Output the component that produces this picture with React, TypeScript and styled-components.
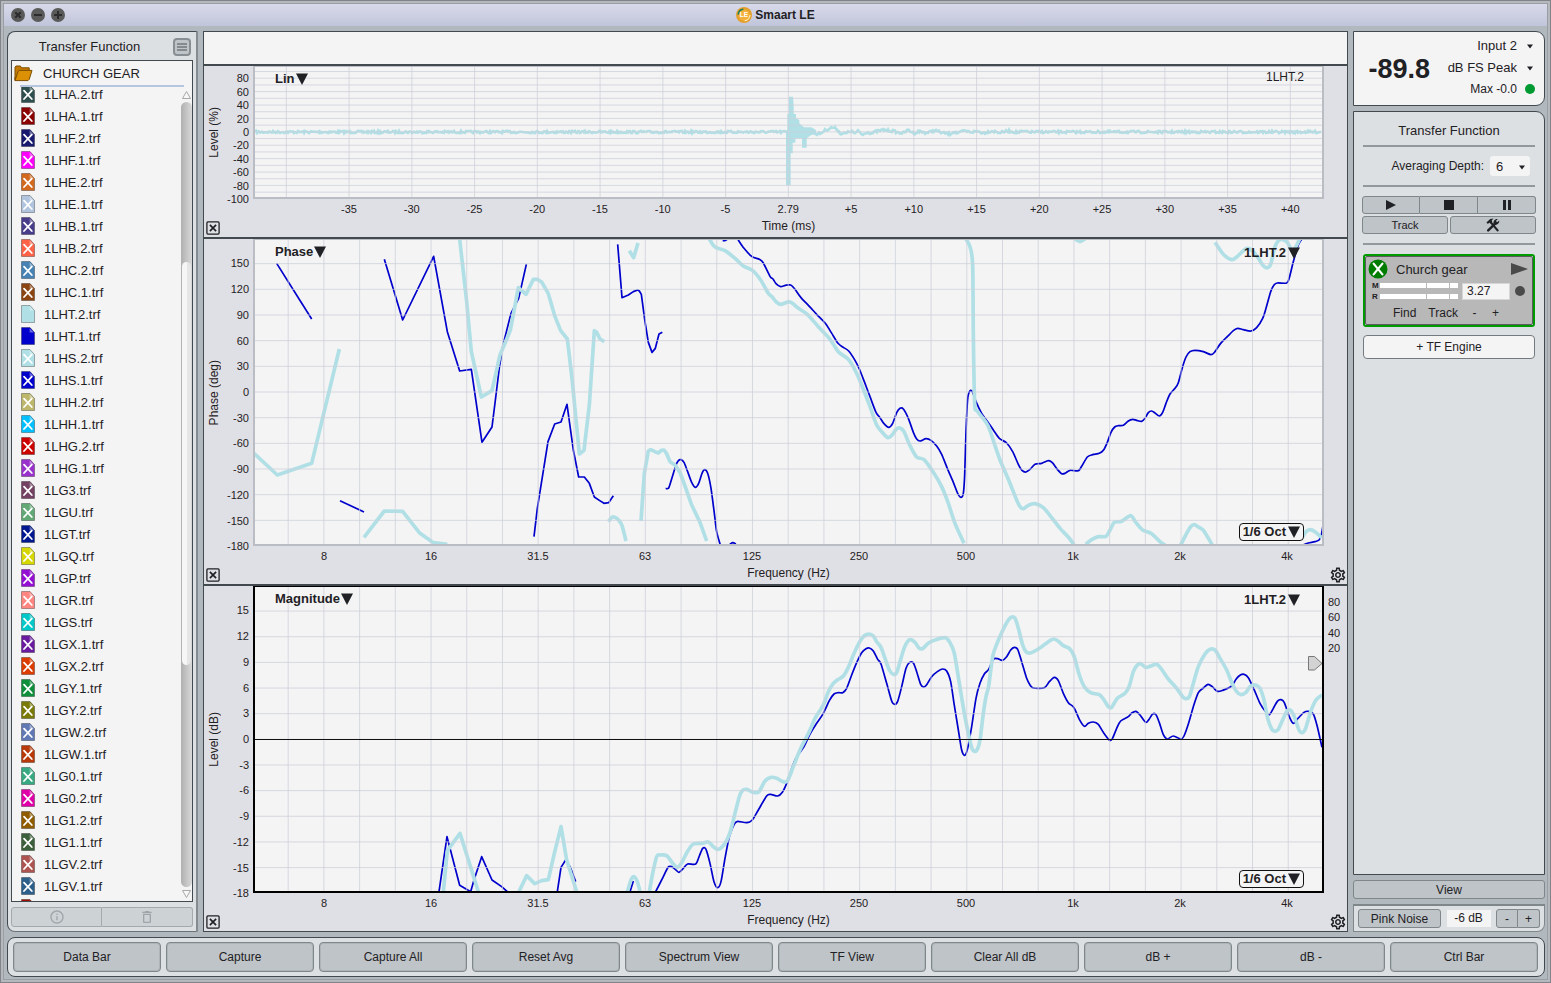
import React from "react";
import styled, { createGlobalStyle, css } from "styled-components";
import { MdDeleteOutline, MdInfoOutline, MdOutlineSettings } from "react-icons/md";

const ink = "#1f2124";
const edge = "#424a50";
const steel = "#bec4c8";
const steelEdge = "#7f878b";
const panelBg = "#dce0e3";
const paper = "#f4f4f4";
const light = "#b0e0e6";
const blue = "#0000cd";

const Global = createGlobalStyle`
  *, *::before, *::after { box-sizing: border-box; }
  body { margin: 0; font-family: "Liberation Sans", Arial, sans-serif; font-size: 12px; color: ${ink}; }
  button, input, select { font: inherit; color: inherit; margin: 0; }
`;

/* ---------- window frame ---------- */

const Window = styled.div`
  height: 100vh;
  min-height: 640px;
  padding: 2px;
  border: 1px solid #808488;
  background: #b5b9be;
  display: flex;
`;

const WindowInner = styled.div`
  flex: 1;
  min-width: 0;
  display: flex;
  flex-direction: column;
  border: 1px solid #9a9fa5;
  background: #b1b8be;
`;

const TitleBar = styled.header`
  height: 22px;
  padding: 0 7px;
  display: grid;
  grid-template-columns: 1fr auto 1fr;
  align-items: center;
  background: linear-gradient(#d8daea, #c1c5da);
`;

const WindowButtons = styled.div`
  display: flex;
  gap: 6px;
`;

const WindowButton = styled.button`
  width: 14px;
  height: 14px;
  padding: 0;
  border: 0;
  border-radius: 50%;
  background: #5a5a5a;
  svg { display: block; }
`;

const AppTitle = styled.h1`
  margin: 0;
  display: flex;
  align-items: center;
  gap: 3px;
  font-size: 12px;
  line-height: 16px;
`;

const Body = styled.div`
  flex: 1;
  min-height: 0;
  padding: 5px 2px 2px 3px;
  display: flex;
  flex-direction: column;
  gap: 5px;
`;

const Workspace = styled.div`
  flex: 1;
  min-height: 0;
  display: grid;
  grid-template-columns: 191px minmax(0, 1fr) 192px;
  gap: 5px;
`;

const steelButton = css`
  padding: 0;
  border: 1px solid ${steelEdge};
  background: ${steel};
  display: flex;
  align-items: center;
  justify-content: center;
`;

/* ---------- data bar ---------- */

const DataBar = styled.aside`
  min-height: 0;
  padding: 0 3px 4px 3px;
  display: flex;
  flex-direction: column;
  background: ${panelBg};
  border: 1px solid ${edge};
  border-right: 2px solid #848c92;
  border-bottom-color: #6a7278;
  border-radius: 8px 0 0 8px;
`;

const DataHead = styled.div`
  height: 28px;
  display: grid;
  grid-template-columns: 1fr 20px;
  align-items: center;
  padding-top: 1px;
`;

const DataTitle = styled.h2`
  margin: 0;
  padding-right: 5px;
  font-size: 13px;
  font-weight: 400;
  text-align: center;
`;

const MenuButton = styled.button`
  ${steelButton}
  width: 18px;
  height: 18px;
  border-radius: 4px;
  border-width: 2px;
  border-color: #878f94;
`;

const Library = styled.div`
  flex: 1;
  min-height: 0;
  display: flex;
  flex-direction: column;
  border: 1px solid ${edge};
  background: ${paper};
`;

const Folder = styled.button`
  height: 24px;
  padding: 0 0 0 2px;
  border: 0;
  background: none;
  display: flex;
  align-items: center;
  gap: 10px;
  font-size: 13px;
`;

const FolderRule = styled.div`
  height: 2px;
  margin: 0 8px;
  background: #b6c6df;
`;

const FileArea = styled.div`
  flex: 1;
  min-height: 0;
  display: grid;
  grid-template-columns: 1fr 11px;
`;

const FileList = styled.ul`
  margin: 0;
  padding: 0;
  list-style: none;
  overflow: hidden;
  & > li:first-child { margin-top: -4px; }
`;

const FileButton = styled.button`
  width: 100%;
  height: 22px;
  padding: 0 0 0 9px;
  border: 0;
  background: none;
  display: flex;
  align-items: center;
  gap: 9px;
  font-size: 13px;
  text-align: left;
  svg { display: block; }
`;

const ScrollBar = styled.div`
  display: flex;
  flex-direction: column;
  padding: 3px 0 2px;
  gap: 2px;
  svg { display: block; height: 10px; }
`;

const ScrollTrack = styled.div`
  flex: 1;
  display: grid;
  grid-template-rows: 160fr 404fr 222fr;
  border-radius: 6px;
  background: linear-gradient(90deg, #b0b0b0, #d9d9d9);
`;

const ScrollThumb = styled.div`
  grid-row: 2;
  margin: 0 1px;
  border-radius: 5px;
  background: linear-gradient(90deg, #f6f6f6 50%, #e6e6e6 50%);
`;

const DataActions = styled.div`
  margin-top: 5px;
  height: 20px;
  display: grid;
  grid-template-columns: 1fr 1fr;
`;

const DataAction = styled.button`
  ${steelButton}
  background: #cdd2d5;
  border-color: #a3a9ad;
  color: #a0a5a9;
  &:first-child { border-radius: 3px 0 0 3px; }
  &:last-child { border-radius: 0 3px 3px 0; border-left-width: 0; }
`;

/* ---------- plots ---------- */

const Center = styled.main`
  min-width: 0;
  min-height: 0;
  display: grid;
  grid-template-rows: 34px minmax(0, 173fr) minmax(0, 347fr) minmax(0, 345fr);
  border: 1px solid ${edge};
  background: #dfe0e5;
`;

const Banner = styled.div`
  background: ${paper};
  border-bottom: 2px solid ${edge};
`;

const PlotSection = styled.section`
  min-height: 0;
  display: grid;
  grid-template-columns: 49px minmax(0, 1fr) 23px;
  grid-template-rows: minmax(0, 1fr) 20px 18px;
  &:not(:last-child) { border-bottom: 2px solid ${edge}; }
`;

const YAxis = styled.div`
  display: grid;
  grid-template-columns: 20px 1fr;
  align-items: center;
  min-height: 0;
`;

const YTitle = styled.span`
  writing-mode: vertical-rl;
  transform: rotate(180deg);
  line-height: 20px;
  font-size: 12px;
  justify-self: start;
  white-space: nowrap;
`;

const AxisSvg = styled.svg`
  display: block;
  width: 100%;
  height: 100%;
  min-height: 0;
  overflow: visible;
  fill: ${ink};
  font-size: 11px;
`;

const Frame = styled.div<{ $active?: boolean }>`
  position: relative;
  min-height: 0;
  border: 2px solid ${(p) => (p.$active ? "#000" : "#babdc3")};
  border-top-width: 1px;
  background: ${paper};
`;

const Chart = styled.svg`
  display: block;
  width: 100%;
  height: 100%;
  path, line { vector-effect: non-scaling-stroke; fill: none; }
  .grid { stroke: rgba(204, 207, 217, 0.75); stroke-width: 1; }
`;

const PlotMenu = styled.button<{ $place: "left" | "right" | "foot" }>`
  position: absolute;
  padding: 0;
  border: 0;
  background: none;
  display: flex;
  align-items: center;
  font-size: 13px;
  font-weight: 700;
  line-height: 16px;
  white-space: nowrap;
  ${(p) => p.$place === "left" && css`top: 4px; left: 20px; gap: 1px;`}
  ${(p) => p.$place === "right" && css`top: 5px; right: 22px; gap: 2px;`}
  ${(p) =>
    p.$place === "foot" &&
    css`
      right: 18px;
      bottom: 3px;
      height: 18px;
      padding: 0 3px;
      gap: 2px;
      border: 1px solid #111;
      border-radius: 4px;
      background: ${paper};
    `}
`;

const PlotName = styled.span`
  position: absolute;
  top: 3px;
  right: 18px;
  font-size: 12px;
  line-height: 14px;
`;

const Marker = styled.svg`
  position: absolute;
  right: -1px;
  top: 22%;
  margin-top: 2px;
`;

const XTitle = styled.span`
  grid-column: 2;
  text-align: center;
  line-height: 14px;
`;

const CloseBox = styled.button`
  grid-column: 1;
  width: 14px;
  height: 14px;
  margin: 2px 0 0 2px;
  padding: 0;
  border: 0;
  background: none;
  svg { display: block; }
`;

const GearButton = styled.button`
  padding: 0;
  border: 0;
  background: none;
  display: flex;
  justify-content: flex-end;
  svg { display: block; }
`;

/* ---------- control bar ---------- */

const Controls = styled.aside`
  min-height: 0;
  display: flex;
  flex-direction: column;
  gap: 5px;
`;

const LevelMeter = styled.section`
  height: 75px;
  padding: 1px 9px 4px 0;
  display: grid;
  grid-template-columns: 1fr auto;
  align-items: center;
  border: 1px solid ${edge};
  border-radius: 0 9px 9px 0;
  background: ${paper};
`;

const LevelValue = styled.strong`
  font-size: 27px;
  line-height: 30px;
  text-align: right;
  padding-top: 4px;
  padding-right: 17px;
`;

const LevelSource = styled.div`
  display: flex;
  flex-direction: column;
`;

const SourceRow = styled.label`
  height: 22px;
  display: flex;
  align-items: center;
  justify-content: flex-end;
  gap: 8px;
  svg { flex: none; }
`;

const PlainSelect = styled.select`
  appearance: none;
  padding: 0;
  border: 0;
  background: none;
  font-size: 13px;
  text-align-last: right;
`;

const TfPanel = styled.section`
  flex: 1;
  min-height: 0;
  padding: 0 8px;
  display: flex;
  flex-direction: column;
  border: 1px solid ${edge};
  border-radius: 0 9px 0 0;
  background: ${panelBg};
`;

const TfTitle = styled.h2`
  margin: 0;
  padding-top: 2px;
  height: 33px;
  line-height: 33px;
  font-size: 13px;
  font-weight: 400;
  text-align: center;
`;

const Rule = styled.hr`
  width: 172px;
  margin: 0 auto;
  height: 2px;
  border: 0;
  background: #92999d;
  flex: none;
`;

const DepthRow = styled.label`
  height: 38px;
  padding-right: 6px;
  display: flex;
  align-items: center;
  justify-content: flex-end;
  gap: 6px;
`;

const DepthField = styled.span`
  width: 40px;
  height: 20px;
  padding: 0 3px 0 6px;
  display: flex;
  align-items: center;
  justify-content: space-between;
  border-radius: 3px;
  background: ${paper};
  select { text-align-last: left; }
`;

const Transport = styled.div`
  margin-top: 9px;
  height: 18px;
  display: grid;
  grid-template-columns: repeat(3, 1fr);
`;

const TransportButton = styled.button`
  ${steelButton}
  &:first-child { border-radius: 3px 0 0 3px; }
  &:last-child { border-radius: 0 3px 3px 0; }
  &:not(:first-child) { border-left-width: 0; }
`;

const ToolRow = styled.div`
  margin: 2px 0 9px;
  height: 18px;
  display: grid;
  grid-template-columns: 1fr 1fr;
  gap: 2px;
`;

const ToolButton = styled.button`
  ${steelButton}
  border-radius: 3px;
  font-size: 11px;
`;

const Engine = styled.article`
  width: 172px;
  margin: 9px auto 8px;
  border: 2px solid #009a00;
  border-radius: 3px;
`;

const EngineInner = styled.div`
  height: 69px;
  border: 1px solid #5c5c60;
  border-radius: 2px;
  background: #b8b8b8;
`;

const EngineHead = styled.div`
  height: 24px;
  padding: 0 4px 0 2px;
  display: grid;
  grid-template-columns: 20px 1fr 18px;
  column-gap: 8px;
  align-items: center;
  font-size: 13px;
  svg { display: block; }
`;

const EngineLevels = styled.div`
  height: 20px;
  padding: 0 5px 0 6px;
  display: grid;
  grid-template-columns: 85px 48px 10px;
  column-gap: 5px;
  align-items: center;
`;

const Meters = styled.div`
  display: grid;
  row-gap: 2px;
`;

const MeterRow = styled.div`
  display: grid;
  grid-template-columns: 8px 1fr;
  align-items: center;
  height: 9px;
  font-size: 8px;
  font-weight: 700;
  line-height: 9px;
`;

const MeterBar = styled.div`
  height: 5px;
  display: grid;
  grid-template-columns: 46px 22px 8px;
  gap: 1px;
  span { background: #fff; }
`;

const DelayInput = styled.input`
  width: 48px;
  height: 17px;
  padding: 0 4px;
  border: 1px solid #d6d6d6;
  background: ${paper};
  font-size: 12px;
`;

const StatusDot = styled.span<{ $color: string }>`
  width: 10px;
  height: 10px;
  border-radius: 50%;
  background: ${(p) => p.$color};
`;

const EngineActions = styled.div`
  height: 23px;
  padding-left: 27px;
  display: flex;
  align-items: center;
  gap: 12px;
`;

const TextButton = styled.button`
  padding: 0;
  border: 0;
  background: none;
  min-width: 9px;
`;

const AddEngine = styled.button`
  width: 172px;
  height: 24px;
  margin: 0 auto;
  padding: 0;
  border: 1px solid #747b80;
  border-radius: 4px;
  background: ${paper};
`;

const ViewButton = styled.button`
  ${steelButton}
  height: 19px;
  border-radius: 3px;
`;

const Generator = styled.section`
  height: 28px;
  padding: 0 4px;
  display: flex;
  align-items: center;
  justify-content: space-between;
  border: 1px solid ${steelEdge};
  border-top-width: 2px;
  border-radius: 0 0 8px 0;
  background: ${panelBg};
`;

const NoiseButton = styled.button`
  ${steelButton}
  width: 83px;
  height: 19px;
  border-radius: 3px;
`;

const NoiseLevel = styled.output`
  width: 44px;
  line-height: 17px;
  background: ${paper};
  text-align: center;
`;

const Stepper = styled.div`
  width: 44px;
  height: 19px;
  display: grid;
  grid-template-columns: 1fr 1fr;
`;

/* ---------- command bar ---------- */

const CommandBar = styled.nav`
  height: 40px;
  padding: 4px 6px 4px 5px;
  display: grid;
  grid-auto-flow: column;
  grid-auto-columns: minmax(0, 1fr);
  gap: 5px;
  border: 1px solid ${edge};
  border-radius: 8px;
  background: ${panelBg};
`;

const CommandButton = styled.button`
  ${steelButton}
  border-radius: 4px;
  box-shadow: inset 0 0 0 1px rgba(127, 135, 139, 0.25);
`;

/* ---------- drawings ---------- */

const Down = () => (
  <svg width="12" height="12" viewBox="0 0 12 12" aria-hidden="true">
    <path d="M0 0.5H12L6 12Z" fill={ink} />
  </svg>
);

const Caret = () => (
  <svg width="10" height="8" viewBox="0 0 10 8" aria-hidden="true">
    <path d="M2 3.5H8L5 7.5Z" fill={ink} />
  </svg>
);

const Logo = () => (
  <svg width="16" height="16" viewBox="0 0 16 16" aria-hidden="true">
    <circle cx="8" cy="8" r="8" fill="#e5a02c" />
    <circle cx="8" cy="8" r="5.6" fill="#f3b13c" />
    <path d="M2.2 7.6A5.9 5.9 0 0 1 7.4 2.2" fill="none" stroke="#1c8059" strokeWidth="1.6" />
    <path d="M14 8A6 6 0 0 1 8.6 13.8" fill="none" stroke="#fff0c8" strokeWidth="1.1" />
    <text x="8" y="10.4" textAnchor="middle" fontSize="6.5" fontWeight="700" fill="#fff">LE</text>
  </svg>
);

const FolderIcon = () => (
  <svg width="19" height="17" viewBox="0 0 19 17" aria-hidden="true">
    <path d="M1 15V2.2L2 1H6.4L7.6 2.8H15.2V6" fill="#c47a02" stroke="#7d4e00" strokeWidth="1" />
    <path d="M1 15.6L4.2 6.2L5.2 5.4H18L15.2 14.4L14 15.6Z" fill="#dc9006" stroke="#7d4e00" strokeWidth="1" />
    <path d="M1 15.6V12" stroke="#7d4e00" />
  </svg>
);

const FileIcon = ({ color, hidden }: { color: string; hidden: boolean }) => (
  <svg width="14" height="18" viewBox="0 0 14 18" aria-hidden="true">
    <path d="M0.5 0.5H9L13.5 5.5V17.5H0.5Z" fill={color} stroke="rgba(0,0,0,0.3)" />
    <path d="M8.6 1.2V5.4H12.8Z" fill="rgba(255,255,255,0.4)" />
    {hidden && (
      <path d="M3 5.6L10.8 14M10.8 5.6L3 14" stroke="#fff" strokeWidth="1.8" strokeLinecap="round" />
    )}
  </svg>
);

const ToolsIcon = () => (
  <svg width="14" height="14" viewBox="0 0 14 14" aria-hidden="true">
    <path d="M2.2 12.4L9.2 5.6" stroke={ink} strokeWidth="2.4" strokeLinecap="round" />
    <path d="M7.6 6C7 3.4 8.8 0.6 11.8 1.1L9.9 2.9L11.2 4.2L13.2 2.4C13.6 5.2 11 7.4 8.4 6.6Z" fill={ink} />
    <path d="M4.8 4.4L11.6 12.4" stroke={ink} strokeWidth="2.2" strokeLinecap="round" />
    <path d="M0.4 4.4L4.2 1L7.4 0.6L5.8 2.4L6.2 4L4.4 5.6L3.2 4.6L2 5.9Z" fill={ink} />
  </svg>
);

/* ---------- trace data ---------- */

type Block = [number, string];
interface Trace {
  blocks: Block[];
  straight?: boolean;
}

const phaseBlue: Trace[] = [
  { straight: true, blocks: [[0, "80,85 185,252"]] },
  { straight: true, blocks: [[0, "270,797 342,831"]] },
  { straight: true, blocks: [[0, "403,73 458,255 551,64 592,290 629,408 664,403 696,622 726,576 738,480 748,398 758,335 783,235 806,190 829,88"]] },
  { straight: true, blocks: [[0, "852,905 862,820 894,620 914,567 933,561 951,508 970,645 986,726 1003,726 1018,745 1033,786 1048,796 1062,805 1076,803 1090,782"]] },
  { straight: true, blocks: [[1050, "53,28 66,188 85,180 100,170 113,165 118,168 124,178 135,260 145,322 156,352 166,340 177,297 187,292"]] },
  { blocks: [[1050, "197,761 206,759 214,735 228,690 236,676 243,674 252,682 263,710 275,742 286,757 296,745 306,715 314,704 323,715 333,760 343,835 350,890 361,930"]] },
  { blocks: [[1050, "368,17 375,17 381,14"]] },
  { blocks: [[1050, "388,930 398,923 408,927"]] },
  {
    blocks: [
      [1050, "413,12 432,40 456,65 478,73 490,84 510,124 519,132 528,146 542,155 556,151 572,150 585,163 603,188 628,214 650,238 676,265 694,293 714,325 730,337 746,348 765,376 778,402 793,440 810,485 828,532 840,548 852,566 866,577 878,565 890,533 900,520 910,522 925,550 940,592 950,612 960,618 978,611 993,616 1010,633 1025,658 1042,700 1060,742 1073,775 1083,787 1090,775 1094,720 1098,590 1103,492 1110,467 1118,472 1128,500 1145,535 1163,560 1180,585"],
      [2100, "148,610 170,624 188,650 205,688 216,706 228,711 240,703 255,688 275,685 295,677 307,683 322,703 335,716 345,715 360,706 385,707 395,694 412,666 428,659 448,655 460,646 472,622 483,592 494,576 505,572 520,571 535,558 548,553 560,556 575,559 585,550 595,533 605,528 615,534 628,543 638,532 648,505 660,477 675,460 685,443 697,398 708,366 720,350 735,346 760,350 783,359 795,350 812,325 835,302 850,287 863,280 880,284 903,288 920,278 938,250 948,220 962,170 972,150 982,144 1010,144 1018,128 1030,80 1045,30 1057,10"],
    ],
  },
  { blocks: [[2100, "1060,930 1075,924 1095,920 1108,914 1115,895 1121,858"]] },
];

const phaseLight: Trace[] = [
  { straight: true, blocks: [[0, "12,655 82,720 185,685 268,342"]] },
  { straight: true, blocks: [[0, "342,907 403,828 458,829 508,893 550,923 592,928"]] },
  { straight: true, blocks: [[0, "629,12 650,200 664,350 694,486 726,467 750,360 781,286 805,158 828,178 850,133 862,133 875,141 895,176 915,245 932,287 952,312 966,430 988,657 1002,646 1018,510 1033,287 1040,292 1050,312 1063,320"]] },
  { blocks: [[1050, "25,860 35,848 42,846 55,854 66,872 78,918"]] },
  { straight: true, blocks: [[1050, "123,858 133,715 145,648 152,644 165,650 175,654 184,646 192,645 200,656 210,680 225,690 240,712 256,756 275,810 300,862 320,918"]] },
  { straight: true, blocks: [[1050, "88,47 101,68 114,24"]] },
  { blocks: [[1050, "328,12 345,36 375,47 405,70 430,93 458,107 482,135 505,175 516,185 528,200 542,208 570,201 595,220 622,238 655,275 690,313 715,350 745,373 765,405 785,450 810,515 830,570 848,593 864,608 878,598 888,583 900,579 912,590 930,632 950,666 972,674 1000,712 1025,755 1045,805 1065,865 1092,925"]] },
  {
    blocks: [
      [1050, "1098,12 1110,35 1118,90 1120,300 1124,505 1132,528 1163,570 1185,632"],
      [2100, "150,675 175,733 200,795 210,815 220,821 235,811 255,806 280,818 305,848 330,880 352,903 372,928"],
    ],
  },
  { blocks: [[2100, "375,12 390,20 405,12"]] },
  { blocks: [[2100, "407,928 425,914 445,905 468,904 480,885 493,862 515,859 542,842 558,863 578,885 605,896 630,920 645,930"]] },
  { blocks: [[2100, "692,930 710,895 722,875 733,869 745,876 760,886 775,910 787,930"]] },
  { blocks: [[2100, "795,22 820,58 845,74 860,66 885,43 900,42 920,62 940,92 953,98 963,85 975,35 990,14 1010,20 1025,45 1035,40 1050,10"]] },
  { blocks: [[2100, "1058,905 1068,890 1080,884 1095,890 1115,908"]] },
];

const magBlue: Trace[] = [
  { straight: true, blocks: [[450, "117,935 141,770 179,916 212,935 222,900 245,830 276,900 305,920 322,935"]] },
  { straight: true, blocks: [[450, "472,935 483,862 497,840 510,860 527,905"]] },
  { straight: true, blocks: [[450, "690,935 700,903"]] },
  {
    blocks: [
      [450, "767,935 790,890 804,862 815,860 826,868 837,877 850,865 863,852 887,852 898,828 908,805 918,808 930,850 942,905 953,923 963,905 975,835 988,770 1003,732 1013,724 1040,728 1057,720 1075,690 1100,648 1112,643 1133,648 1147,637"],
      [1350, "262,605 285,540 312,500 330,462 350,430 370,400 388,362 402,342 415,338 428,338 440,325 455,285 470,248 485,218 498,206 508,204 520,213 533,238 543,252 560,310 575,363 584,373 593,364 605,320 618,265 628,248 640,249 650,275 662,313 671,321 680,314 695,290 712,275 727,267 740,273 752,305 762,370 775,450 785,510 794,526 803,505 815,440 828,355 840,310 853,282 866,268 880,238 893,236 907,241 920,230 932,210 943,202 953,208 965,245 980,295 990,315 1000,324"],
      [2250, "133,323 148,305 163,292 175,302 190,340 205,368 222,383 238,418 253,439 265,430 280,426 295,433 310,457 328,480 337,476 350,445 362,423 385,410 395,399 408,394 420,405 437,427 447,418 458,402 468,404 478,428 490,464 502,477 520,468 543,477 552,468 565,432 580,380 595,338 610,324 624,313 637,320 652,334 668,331 695,318 708,298 720,286 732,283 745,293 762,328 780,370 797,395 808,404 820,385 832,364 843,359 853,368 868,410 880,430 895,414 912,397 925,394 940,402 952,440 966,502"],
    ],
  },
];

const magLight: Trace[] = [
  { straight: true, blocks: [[450, "130,935 142,812 180,760 235,935"]] },
  { straight: true, blocks: [[450, "357,935 380,887 404,911 425,902 445,899 463,820 483,740 500,840 530,935"]] },
  { blocks: [[450, "682,935 693,900 702,890 712,905 720,935"]] },
  {
    blocks: [
      [450, "748,935 758,880 770,830 780,825 800,827 818,850 832,862 845,848 862,815 880,792 905,790 925,786 940,800 955,808 975,790 990,758 1005,700 1018,650 1027,632 1040,628 1060,637 1077,635 1095,603 1113,592 1130,595 1147,604 1162,603 1180,560"],
      [1350, "300,510 328,455 345,415 370,375 385,335 400,310 415,298 430,288 445,262 460,225 478,187 492,168 508,162 520,168 530,185 543,202 555,235 568,270 580,283 590,278 600,245 613,203 623,184 632,179 645,187 657,204 668,206 685,190 705,180 735,173 750,188 763,220 778,310 793,400 806,465 815,503 823,514 832,508 840,480 850,400 858,350 866,318 878,230 890,193 905,158 920,128 933,112 945,115 955,145 968,195 978,215 990,219 1010,210"],
      [2250, "135,193 150,182 162,177 175,184 190,197 208,205 222,228 238,285 253,320 272,338 298,344 312,360 325,380 335,382 352,355 375,340 388,318 400,275 412,255 422,251 438,262 455,257 470,253 485,268 505,297 530,325 548,350 558,356 568,350 580,310 595,260 615,222 630,208 645,210 660,235 680,270 697,312 710,335 722,344 738,337 750,320 765,315 780,325 792,360 803,415 815,447 825,454 835,448 850,415 862,392 873,392 885,415 897,450 907,458 917,445 932,395 948,360 966,345"],
    ],
  },
];

const decay =
  "395,393 408,402 424,400 432,392 445,387 457,382 470,386 480,400 498,400 512,393 525,400 535,393 548,405 560,396 575,400 590,394 610,390 640,393 655,398 670,399 685,390 703,400 718,394 740,399 765,391 785,398 810,402 820,395 835,400 850,393 875,396 893,394 910,399 935,393 960,398 985,393 1010,397 1040,394";

const impulse =
  "M1608 395V555H1622V460H1628V428H1636V415H1656V443H1670V415L1684 405L1698 402V390L1684 382H1662L1648 370V360L1638 355V342H1631V318L1629 290H1617V342H1612V395Z";

const parse = (blocks: Block[]): [number, number][] =>
  blocks.flatMap(([shift, text]) =>
    text.split(" ").map((pair): [number, number] => {
      const [x, y] = pair.split(",").map(Number);
      return [x + shift, y];
    })
  );

const tracePath = ({ blocks, straight }: Trace) => {
  const p = parse(blocks);
  if (straight) return "M" + p.map((q) => q.join(" ")).join("L");
  let d = `M${p[0][0]} ${p[0][1]}`;
  for (let i = 0; i < p.length - 1; i++) {
    const a = p[Math.max(i - 1, 0)];
    const b = p[i];
    const c = p[i + 1];
    const e = p[Math.min(i + 2, p.length - 1)];
    d += `C${b[0] + (c[0] - a[0]) / 7} ${b[1] + (c[1] - a[1]) / 7} ${c[0] - (e[0] - b[0]) / 7} ${c[1] - (e[1] - b[1]) / 7} ${c[0]} ${c[1]}`;
  }
  return d;
};

const noisePath = (() => {
  let seed = 7;
  const rand = () => (seed = (seed * 16807) % 2147483647) / 2147483647 - 0.5;
  const tail = parse([[1290, decay]]);
  let d = "M15 396";
  for (let x = 18; x < 3216; x += 3) {
    let y = 396;
    for (let i = 0; i < tail.length - 1; i++) {
      const [x0, y0] = tail[i];
      const [x1, y1] = tail[i + 1];
      if (x >= x0 && x < x1) y = y0 + ((y1 - y0) * (x - x0)) / (x1 - x0);
    }
    d += `L${x} ${(y + rand() * 7).toFixed(1)}`;
  }
  return d;
})();

const Traces = ({ traces, color, width }: { traces: Trace[]; color: string; width: number }) => (
  <g stroke={color} strokeWidth={width} strokeLinejoin="round">
    {traces.map((t, i) => (
      <path key={i} d={tracePath(t)} />
    ))}
  </g>
);

const Grid = ({ xs, ys }: { xs: number[]; ys: number[] }) => (
  <g className="grid">
    {xs.map((x) => <line key={`x${x}`} x1={x} x2={x} y1="0" y2="940" />)}
    {ys.map((y) => <line key={`y${y}`} x1="0" x2="3230" y1={y} y2={y} />)}
  </g>
);

const range = <T,>(n: number, f: (i: number) => T): T[] => Array.from({ length: n }, (_, i) => f(i));

const freqGrid = range(29, (i) => 114.5 + i * 107.15);
const timeGrid = range(17, (i) => 109 + i * 188.25);
const levelGrid = range(19, (i) => 395.5 - (90 - i * 10) * 2.01);
const phaseGrid = range(11, (i) => 471 - (150 - i * 30) * 2.567);
const magGrid = range(11, (i) => 478 - (15 - i * 3) * 25.65);

interface Tick {
  at: number;
  label: string;
}

const freqTicks: Tick[] = ["8", "16", "31.5", "63", "125", "250", "500", "1k", "2k", "4k"].map(
  (label, i) => ({ label, at: ((71 + i * 107) / 1071) * 100 })
);
const timeTicks: Tick[] = [
  "-35", "-30", "-25", "-20", "-15", "-10", "-5", "2.79",
  "+5", "+10", "+15", "+20", "+25", "+30", "+35", "+40",
].map((label, i) => ({ label, at: ((96 + i * 62.75) / 1071) * 100 }));
const levelTicks: Tick[] = range(10, (i) => 80 - i * 20).map((v) => ({
  label: String(v),
  at: ((65.9 - v * 0.67) / 133) * 100,
}));
const phaseTicks: Tick[] = range(12, (i) => 150 - i * 30).map((v) => ({
  label: String(v),
  at: ((153 - v * 0.857) / 307) * 100,
}));
const magTicks: Tick[] = range(12, (i) => 15 - i * 3).map((v) => ({
  label: String(v),
  at: ((153 - v * 8.57) / 307) * 100,
}));
const coherenceTicks: Tick[] = ["80", "60", "40", "20"].map((label, i) => ({
  label,
  at: ((16 + i * 15.4) / 307) * 100,
}));

const YLabels = ({ ticks, side = "left" }: { ticks: Tick[]; side?: "left" | "right" }) => (
  <AxisSvg>
    {ticks.map((t) => (
      <text
        key={t.label}
        x={side === "left" ? "100%" : "0"}
        dx={side === "left" ? -4 : 4}
        y={`${t.at}%`}
        dy="4"
        textAnchor={side === "left" ? "end" : "start"}
      >
        {t.label}
      </text>
    ))}
  </AxisSvg>
);

const XAxisSvg = styled(AxisSvg)`
  grid-column: 2;
`;

const XLabels = ({ ticks }: { ticks: Tick[] }) => (
  <XAxisSvg>
    {ticks.map((t) => (
      <text key={t.label} x={`${t.at}%`} y="14" textAnchor="middle">
        {t.label}
      </text>
    ))}
  </XAxisSvg>
);

interface PlotProps {
  yTitle: string;
  xTitle: string;
  yTicks: Tick[];
  xTicks: Tick[];
  active?: boolean;
  settings?: boolean;
  right?: React.ReactNode;
  children: React.ReactNode;
}

const Plot = ({ yTitle, xTitle, yTicks, xTicks, active, settings, right, children }: PlotProps) => (
  <PlotSection>
    <YAxis>
      <YTitle>{yTitle}</YTitle>
      <YLabels ticks={yTicks} />
    </YAxis>
    <Frame $active={active}>{children}</Frame>
    {right ?? <span />}
    <XLabels ticks={xTicks} />
    <span />
    <CloseBox aria-label="Close plot">
      <svg width="14" height="14" viewBox="0 0 14 14">
        <rect x="0.9" y="0.9" width="12.2" height="12.2" rx="1" fill="none" stroke={ink} strokeWidth="1.3" />
        <path d="M3.9 3.9L10.1 10.1M10.1 3.9L3.9 10.1" stroke={ink} strokeWidth="1.7" />
      </svg>
    </CloseBox>
    <XTitle>{xTitle}</XTitle>
    {settings && (
      <GearButton aria-label="Plot settings">
        <MdOutlineSettings size={18} color={ink} />
      </GearButton>
    )}
  </PlotSection>
);

/* ---------- content ---------- */

const files: [string, string][] = [
  ["1LHA.2.trf", "#2f4f4f"], ["1LHA.1.trf", "#8b0000"], ["1LHF.2.trf", "#191970"],
  ["1LHF.1.trf", "#ff00ff"], ["1LHE.2.trf", "#d2691e"], ["1LHE.1.trf", "#b0c4de"],
  ["1LHB.1.trf", "#483d8b"], ["1LHB.2.trf", "#ff6347"], ["1LHC.2.trf", "#4682b4"],
  ["1LHC.1.trf", "#8b4513"], ["1LHT.2.trf", light], ["1LHT.1.trf", blue],
  ["1LHS.2.trf", light], ["1LHS.1.trf", blue], ["1LHH.2.trf", "#bdb76b"],
  ["1LHH.1.trf", "#00bfff"], ["1LHG.2.trf", "#cd0000"], ["1LHG.1.trf", "#9932cc"],
  ["1LG3.trf", "#734263"], ["1LGU.trf", "#62a875"], ["1LGT.trf", "#00188f"],
  ["1LGQ.trf", "#d6d600"], ["1LGP.trf", "#9410d3"], ["1LGR.trf", "#ff8580"],
  ["1LGS.trf", "#00c8c8"], ["1LGX.1.trf", "#6a1a9e"], ["1LGX.2.trf", "#dc3c00"],
  ["1LGY.1.trf", "#0f8f3c"], ["1LGY.2.trf", "#7a7a08"], ["1LGW.2.trf", "#6078b4"],
  ["1LGW.1.trf", "#b83808"], ["1LG0.1.trf", "#38a880"], ["1LG0.2.trf", "#e000a8"],
  ["1LG1.2.trf", "#8f5c00"], ["1LG1.1.trf", "#3a5f3a"], ["1LGV.2.trf", "#ad5350"],
  ["1LGV.1.trf", "#2d5f8b"], ["", "#a01000"],
];

const shown = new Set(["1LHT.1.trf", "1LHT.2.trf"]);

const commands = [
  "Data Bar", "Capture", "Capture All", "Reset Avg", "Spectrum View",
  "TF View", "Clear All dB", "dB +", "dB -", "Ctrl Bar",
];

export default function App() {
  return (
    <Window>
      <Global />
      <WindowInner>
        <TitleBar>
          <WindowButtons>
            {[
              ["Close", "M4.2 4.2L9.8 9.8M9.8 4.2L4.2 9.8"],
              ["Minimise", "M3 7H11"],
              ["Zoom", "M3 7H11M7 3V11"],
            ].map(([name, d]) => (
              <WindowButton key={name} aria-label={name}>
                <svg width="14" height="14" viewBox="0 0 14 14">
                  <path d={d} stroke="#2c2c2c" strokeWidth="2" />
                </svg>
              </WindowButton>
            ))}
          </WindowButtons>
          <AppTitle>
            <Logo />
            Smaart LE
          </AppTitle>
        </TitleBar>
        <Body>
          <Workspace>
            <DataBar>
              <DataHead>
                <DataTitle>Transfer Function</DataTitle>
                <MenuButton aria-label="Menu">
                  <svg width="10" height="8" viewBox="0 0 10 8">
                    <path d="M0 1H10M0 4H10M0 7H10" stroke="#4a5054" strokeWidth="1.2" />
                  </svg>
                </MenuButton>
              </DataHead>
              <Library>
                <Folder>
                  <FolderIcon />
                  CHURCH GEAR
                </Folder>
                <FolderRule />
                <FileArea>
                  <FileList>
                    {files.map(([name, color]) => (
                      <li key={name}>
                        <FileButton>
                          <FileIcon color={color} hidden={!shown.has(name)} />
                          {name}
                        </FileButton>
                      </li>
                    ))}
                  </FileList>
                  <ScrollBar>
                    <svg width="11" height="10" viewBox="0 0 11 10">
                      <path d="M1.5 8.5L5.5 1.5L9.5 8.5Z" fill="#f8f8f8" stroke="#a8a8a8" />
                    </svg>
                    <ScrollTrack>
                      <ScrollThumb />
                    </ScrollTrack>
                    <svg width="11" height="10" viewBox="0 0 11 10">
                      <path d="M1.5 1.5L5.5 8.5L9.5 1.5Z" fill="#f8f8f8" stroke="#a8a8a8" />
                    </svg>
                  </ScrollBar>
                </FileArea>
              </Library>
              <DataActions>
                <DataAction aria-label="Info"><MdInfoOutline size={16} /></DataAction>
                <DataAction aria-label="Delete"><MdDeleteOutline size={16} /></DataAction>
              </DataActions>
            </DataBar>

            <Center>
              <Banner />
              <Plot yTitle="Level (%)" xTitle="Time (ms)" yTicks={levelTicks} xTicks={timeTicks}>
                <Chart viewBox="15 201 3201 390" preserveAspectRatio="none">
                  <path d={noisePath} stroke={light} strokeWidth="2.6" />
                  <path d={impulse} style={{ fill: light }} />
                  <Grid xs={timeGrid} ys={levelGrid} />
                </Chart>
                <PlotMenu $place="left">Lin<Down /></PlotMenu>
                <PlotName>1LHT.2</PlotName>
              </Plot>
              <Plot yTitle="Phase (deg)" xTitle="Frequency (Hz)" yTicks={phaseTicks} xTicks={freqTicks} settings>
                <Chart viewBox="15 15 3201 912" preserveAspectRatio="none">
                  <Traces traces={phaseBlue} color={blue} width={1.7} />
                  <Traces traces={phaseLight} color={light} width={3.7} />
                  <Grid xs={freqGrid} ys={phaseGrid} />
                </Chart>
                <PlotMenu $place="left">Phase<Down /></PlotMenu>
                <PlotMenu $place="right">1LHT.2<Down /></PlotMenu>
                <PlotMenu $place="foot">1/6 Oct<Down /></PlotMenu>
              </Plot>
              <Plot
                yTitle="Level (dB)"
                xTitle="Frequency (Hz)"
                yTicks={magTicks}
                xTicks={freqTicks}
                right={<YLabels ticks={coherenceTicks} side="right" />}
                active
                settings
              >
                <Chart viewBox="15 21 3201 912" preserveAspectRatio="none">
                  <Traces traces={magBlue} color={blue} width={1.7} />
                  <Traces traces={magLight} color={light} width={3.7} />
                  <Grid xs={freqGrid} ys={magGrid} />
                  <line x1="0" x2="3230" y1="478.5" y2="478.5" stroke="#111" strokeWidth="1" />
                </Chart>
                <PlotMenu $place="left">Magnitude<Down /></PlotMenu>
                <PlotMenu $place="right">1LHT.2<Down /></PlotMenu>
                <PlotMenu $place="foot">1/6 Oct<Down /></PlotMenu>
                <Marker width="15" height="15" viewBox="0 0 15 15">
                  <path d="M0.5 0.5H6.5L14 7.5L6.5 14H0.5Z" fill="#d3d3d3" stroke="#777" />
                </Marker>
              </Plot>
            </Center>

            <Controls>
              <LevelMeter>
                <LevelValue>-89.8</LevelValue>
                <LevelSource>
                  <SourceRow>
                    <PlainSelect aria-label="Input"><option>Input 2</option></PlainSelect>
                    <Caret />
                  </SourceRow>
                  <SourceRow>
                    <PlainSelect aria-label="Scale"><option>dB FS Peak</option></PlainSelect>
                    <Caret />
                  </SourceRow>
                  <SourceRow as="div">
                    Max -0.0
                    <StatusDot $color="#009a32" />
                  </SourceRow>
                </LevelSource>
              </LevelMeter>

              <TfPanel>
                <TfTitle>Transfer Function</TfTitle>
                <Rule />
                <DepthRow>
                  Averaging Depth:
                  <DepthField>
                    <PlainSelect><option>6</option></PlainSelect>
                    <Caret />
                  </DepthField>
                </DepthRow>
                <Rule />
                <Transport>
                  <TransportButton aria-label="Play">
                    <svg width="10" height="10" viewBox="0 0 10 10"><path d="M0 0L10 5L0 10Z" fill={ink} /></svg>
                  </TransportButton>
                  <TransportButton aria-label="Stop">
                    <svg width="10" height="10" viewBox="0 0 10 10"><path d="M0 0H10V10H0Z" fill={ink} /></svg>
                  </TransportButton>
                  <TransportButton aria-label="Pause">
                    <svg width="8" height="10" viewBox="0 0 8 10"><path d="M0 0H3V10H0ZM5 0H8V10H5Z" fill={ink} /></svg>
                  </TransportButton>
                </Transport>
                <ToolRow>
                  <ToolButton>Track</ToolButton>
                  <ToolButton aria-label="Tools"><ToolsIcon /></ToolButton>
                </ToolRow>
                <Rule />
                <Engine>
                  <EngineInner>
                    <EngineHead>
                      <svg width="20" height="20" viewBox="0 0 20 20" aria-hidden="true">
                        <circle cx="10" cy="10" r="9.5" fill="#007d00" />
                        <path d="M5.6 4.6L14.4 15.4M14.4 4.6L5.6 15.4" stroke="#fff" strokeWidth="2.2" strokeLinecap="round" />
                      </svg>
                      <span>Church gear</span>
                      <svg width="18" height="12" viewBox="0 0 18 12" aria-hidden="true">
                        <path d="M1 0L18 6L1 12Z" fill="#4a4a4a" />
                      </svg>
                    </EngineHead>
                    <EngineLevels>
                      <Meters>
                        <MeterRow>M<MeterBar><span /><span /><span /></MeterBar></MeterRow>
                        <MeterRow>R<MeterBar><span /><span /><span /></MeterBar></MeterRow>
                      </Meters>
                      <DelayInput aria-label="Delay" defaultValue="3.27" />
                      <StatusDot $color="#4a4a4a" />
                    </EngineLevels>
                    <EngineActions>
                      <TextButton>Find</TextButton>
                      <TextButton>Track</TextButton>
                      <TextButton>-</TextButton>
                      <TextButton>+</TextButton>
                    </EngineActions>
                  </EngineInner>
                </Engine>
                <AddEngine>+ TF Engine</AddEngine>
              </TfPanel>

              <ViewButton>View</ViewButton>
              <Generator>
                <NoiseButton>Pink Noise</NoiseButton>
                <NoiseLevel>-6 dB</NoiseLevel>
                <Stepper>
                  <TransportButton>-</TransportButton>
                  <TransportButton>+</TransportButton>
                </Stepper>
              </Generator>
            </Controls>
          </Workspace>
          <CommandBar>
            {commands.map((c) => (
              <CommandButton key={c}>{c}</CommandButton>
            ))}
          </CommandBar>
        </Body>
      </WindowInner>
    </Window>
  );
}
